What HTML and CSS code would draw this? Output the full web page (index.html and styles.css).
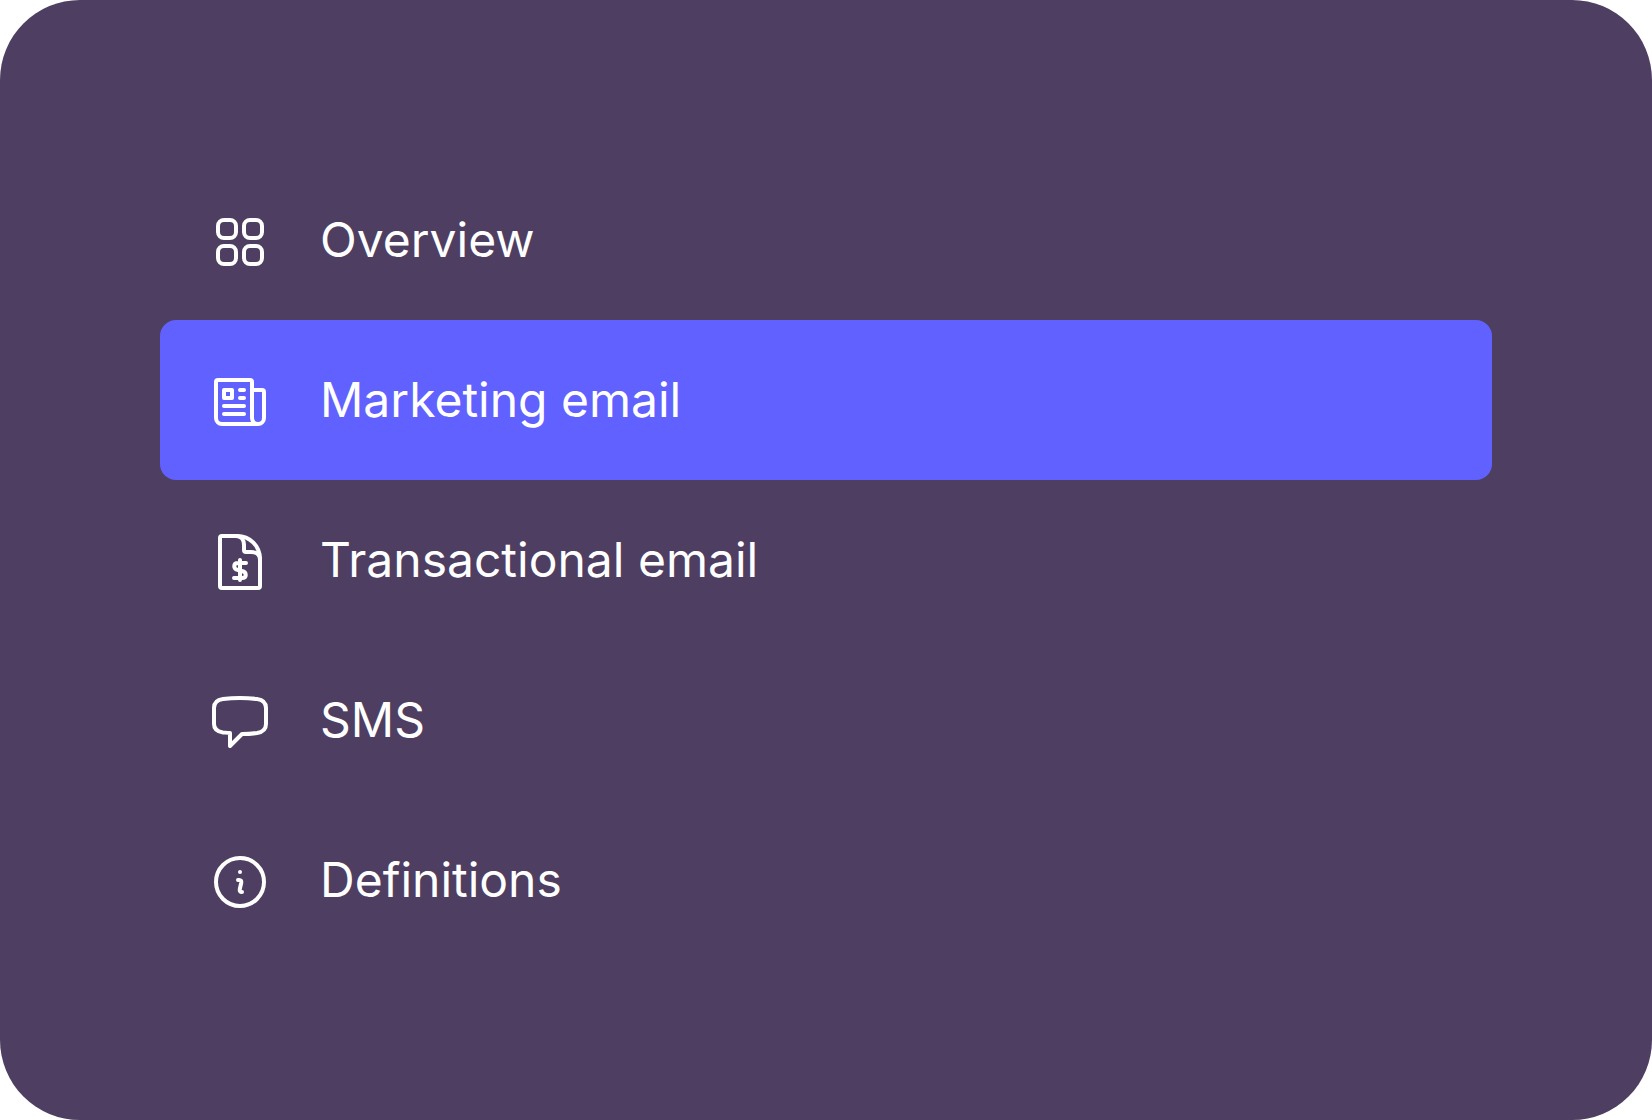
FILE: index.html
```html
<!DOCTYPE html>
<html lang="en">
<head>
  <meta charset="UTF-8" />
  <title>Email navigation</title>
  <meta name="viewport" content="width=device-width, initial-scale=1.0" />
  <link rel="stylesheet" href="styles.css">
</head>
<body>
  <nav class="sidebar">
    <a class="nav-item" href="#overview">
      <svg class="icon" viewBox="0 0 64 64" aria-hidden="true">
        <rect x="10" y="12" width="18" height="18" rx="6" />
        <rect x="36" y="12" width="18" height="18" rx="6" />
        <rect x="10" y="38" width="18" height="18" rx="6" />
        <rect x="36" y="38" width="18" height="18" rx="6" />
      </svg>
      <span>Overview</span>
    </a>

    <a class="nav-item active" href="#marketing" aria-current="page">
      <svg class="icon" viewBox="0 0 64 64" aria-hidden="true">
        <path d="M50 56H14a6 6 0 0 1-6-6V14a2 2 0 0 1 2-2h32a2 2 0 0 1 2 2v36a6 6 0 0 0 12 0V24a2 2 0 0 0-2-2H44" />
        <path d="M16 22h8v8h-8z" />
        <path d="M32 22h4M32 30h4M16 38h20M16 46h20" />
      </svg>
      <span>Marketing email</span>
    </a>

    <a class="nav-item" href="#transactional">
      <svg class="icon" viewBox="0 0 64 64" aria-hidden="true">
        <path d="M29 8H14a2 2 0 0 0-2 2v48a2 2 0 0 0 2 2h36a2 2 0 0 0 2-2V31C52 18 42 8 29 8z" />
        <path d="M28 8c5 0 8 4 8 9v5a2 2 0 0 0 2 2h5c5 0 9 3 9 8" />
        <path d="M32 32v20M38 35h-8c-5 0-5 6 0 7l4 1c5 1 5 7 0 7h-8" />
      </svg>
      <span>Transactional email</span>
    </a>

    <a class="nav-item" href="#sms">
      <svg class="icon" viewBox="0 0 64 64" aria-hidden="true">
        <path d="M32 10c6 0 12 .4 17 1 6 .8 9 4 9 9v16c0 5-3 8-9 9-5 .7-10 1-15 1L22 58V45c-2 0-4-.3-7-.6-6-.8-9-4-9-8.4V20c0-5 3-8.200 9-9 5-.6 11-1 17-1z" />
      </svg>
      <span>SMS</span>
    </a>

    <a class="nav-item" href="#definitions">
      <svg class="icon" viewBox="0 0 64 64" aria-hidden="true">
        <circle cx="32" cy="34" r="24" />
        <circle class="dot" cx="32" cy="24" r="2" />
        <path d="M30 32h1c2 0 2.600 1 2.200 3l-1.400 6c-.4 2 .4 3 2.200 3" />
      </svg>
      <span>Definitions</span>
    </a>
  </nav>
</body>
</html>
```

FILE: styles.css
```css
:root {
  --bg: #4e3e61;
  --active: #6161ff;
  --text: #fff;
}

* {
  box-sizing: border-box;
}

body {
  margin: 0;
  background: #fff;
  color: var(--text);
  font-family: Inter, "Liberation Sans", sans-serif;
}

.sidebar {
  display: flex;
  flex-direction: column;
  min-height: 100vh;
  padding: 160px;
  background: var(--bg);
  border-radius: 80px;
}

.nav-item {
  display: flex;
  align-items: center;
  gap: 48px;
  padding: 48px;
  border-radius: 16px;
  color: inherit;
  font-size: 48px;
  line-height: 64px;
  text-decoration: none;
}

.nav-item.active {
  background: var(--active);
}

.icon {
  flex: none;
  width: 64px;
  height: 64px;
  fill: none;
  stroke: currentColor;
  stroke-width: 4;
  stroke-linecap: round;
  stroke-linejoin: round;
}

.icon .dot {
  fill: currentColor;
  stroke: none;
}
```
